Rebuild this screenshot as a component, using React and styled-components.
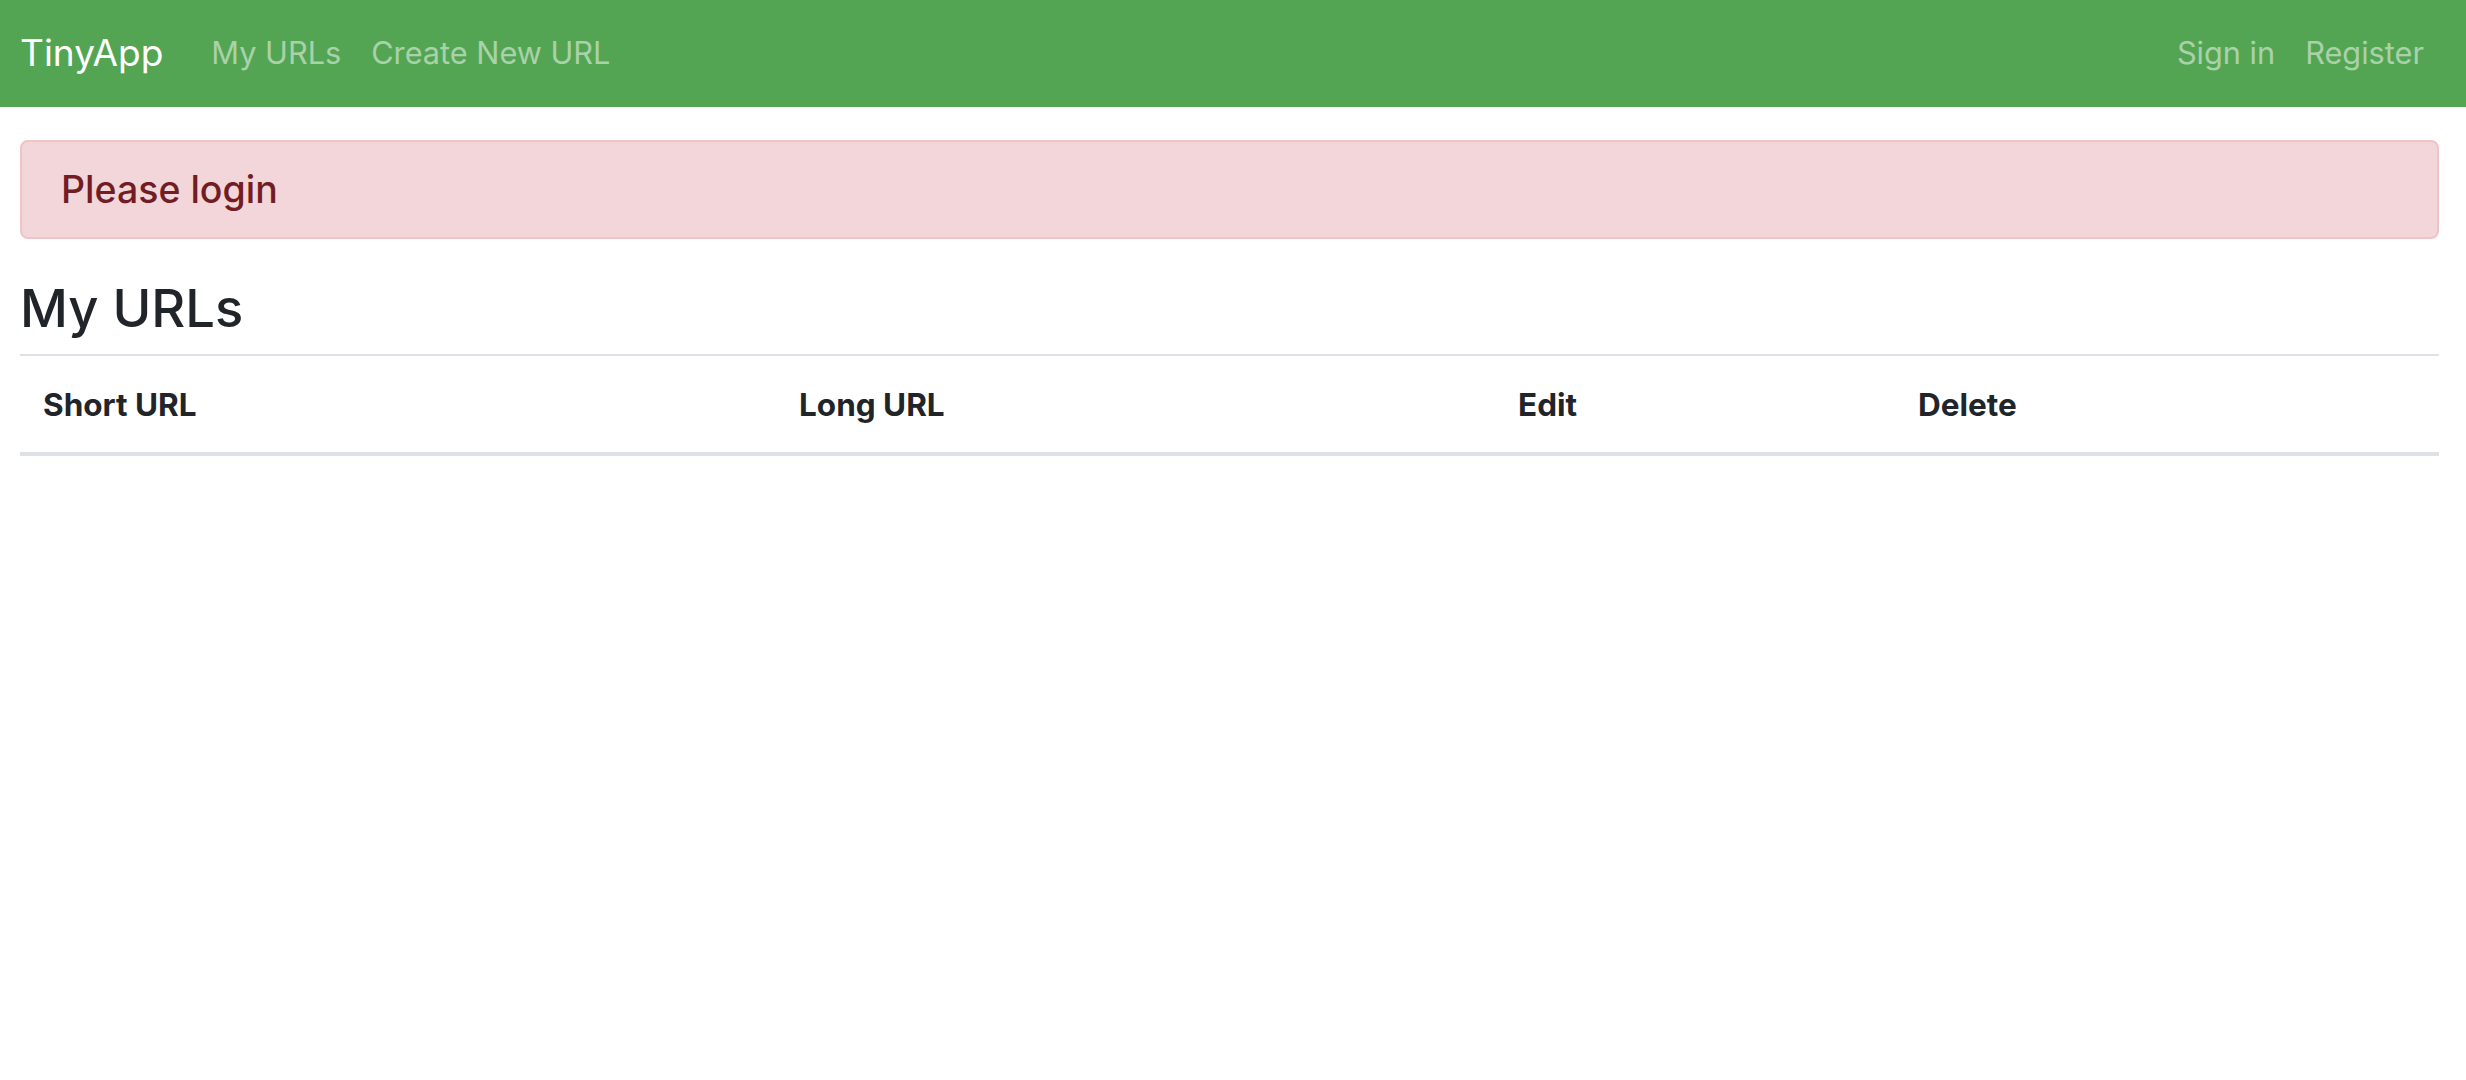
import styled, { createGlobalStyle } from "styled-components";

const GlobalStyle = createGlobalStyle`
  body {
    margin: 0;
    background: #fff;
    font-family: Inter, "Liberation Sans", sans-serif;
    color: #212529;
  }
`;

const Navbar = styled.nav`
  height: 107px;
  background-color: #53a553;
  display: flex;
  align-items: center;
  justify-content: space-between;
  padding: 0 27px 3px 20px;
  box-sizing: border-box;
`;

const NavGroup = styled.div`
  display: flex;
  align-items: center;
`;

const Brand = styled.a`
  font-size: 37px;
  color: #fff;
  text-decoration: none;
  margin-right: 33px;
`;

const NavLink = styled.a`
  font-size: 30.7px;
  color: rgba(255, 255, 255, 0.5);
  text-decoration: none;
  padding: 0 15px;
`;

const Container = styled.main`
  padding: 33px 27px 0 20px;
`;

const Alert = styled.div`
  background-color: #f3d6d9;
  border: 2px solid #f0c3c7;
  border-radius: 8px;
  color: #721c24;
  font-size: 37.5px;
  font-weight: 500;
  line-height: 49px;
  padding: 23px 39px;
`;

const Heading = styled.h3`
  font-size: 52.5px;
  font-weight: 500;
  line-height: 64px;
  margin: 37px 0 14px;
`;

const Table = styled.table`
  width: 100%;
  border-collapse: collapse;
  border-top: 2px solid #dee2e6;
  table-layout: fixed;
`;

const Th = styled.th`
  text-align: left;
  font-size: 31.5px;
  font-weight: 700;
  line-height: 45px;
  padding: 26px 23px 25px;
  border-bottom: 4px solid #dee2e6;
`;

const columns = [
  { label: "Short URL", width: 756 },
  { label: "Long URL", width: 719 },
  { label: "Edit", width: 400 },
  { label: "Delete", width: 544 },
];

const App = () => {
  return (
    <>
      <GlobalStyle />
      <Navbar>
        <NavGroup>
          <Brand href="#">TinyApp</Brand>
          <NavLink href="#">My URLs</NavLink>
          <NavLink href="#">Create New URL</NavLink>
        </NavGroup>
        <NavGroup>
          <NavLink href="#">Sign in</NavLink>
          <NavLink href="#">Register</NavLink>
        </NavGroup>
      </Navbar>
      <Container>
        <Alert>Please login</Alert>
        <Heading>My URLs</Heading>
        <Table>
          <colgroup>
            {columns.map((c) => (
              <col key={c.label} style={{ width: c.width }} />
            ))}
          </colgroup>
          <thead>
            <tr>
              {columns.map((c) => (
                <Th key={c.label}>{c.label}</Th>
              ))}
            </tr>
          </thead>
          <tbody />
        </Table>
      </Container>
    </>
  );
};

export default App;
